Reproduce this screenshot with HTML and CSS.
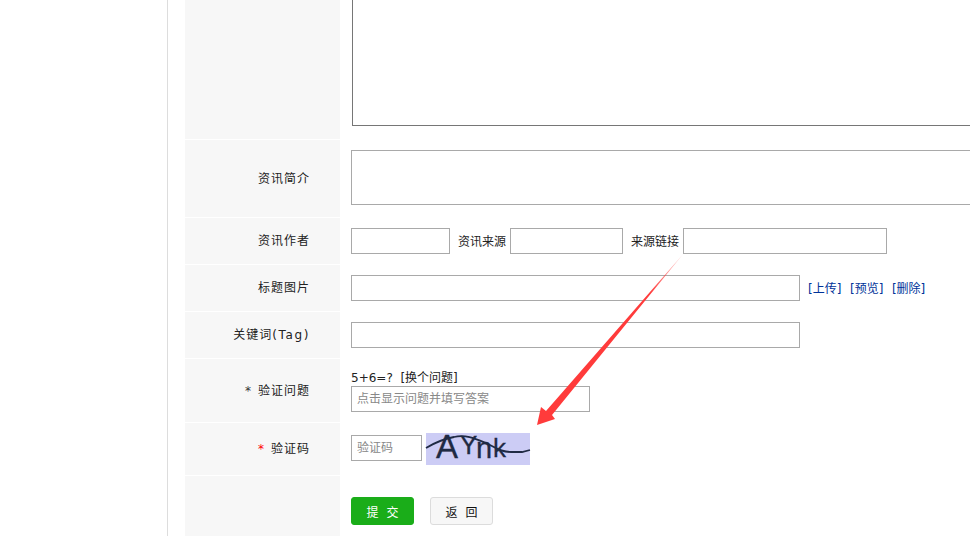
FILE: index.html
```html
<!DOCTYPE html>
<html lang="zh">
<head>
<meta charset="utf-8">
<title>资讯</title>
<link rel="stylesheet" href="styles.css">
</head>
<body>
<div class="page">
  <aside class="side"></aside>
  <form class="form">
    <div class="row r-body">
      <div class="label"></div>
      <div class="field"><div class="editor"></div></div>
    </div>
    <div class="row r-intro">
      <div class="label">资讯简介</div>
      <div class="field"><textarea class="intro"></textarea></div>
    </div>
    <div class="row r-std">
      <div class="label">资讯作者</div>
      <div class="field">
        <input class="in w-author">
        <span class="lab lab-a">资讯来源</span>
        <input class="in w-source">
        <span class="lab lab-b">来源链接</span>
        <input class="in w-link">
      </div>
    </div>
    <div class="row r-std">
      <div class="label">标题图片</div>
      <div class="field">
        <input class="in w-long">
        <span class="links"><a>[上传]</a><a>[预览]</a><a>[删除]</a></span>
      </div>
    </div>
    <div class="row r-std">
      <div class="label"><span>关键词<span class="latin">(Tag)</span></span></div>
      <div class="field"><input class="in w-long"></div>
    </div>
    <div class="row r-q">
      <div class="label"><span class="star-dark">*</span>验证问题</div>
      <div class="field col">
        <div class="q">5+6=?&nbsp;&nbsp;[换个问题]</div>
        <input class="in w-q" placeholder="点击显示问题并填写答案">
      </div>
    </div>
    <div class="row r-code">
      <div class="label"><span class="star-red">*</span>验证码</div>
      <div class="field code">
        <input class="in w-code" placeholder="验证码">
        <svg class="captcha" width="104" height="32" viewBox="0 0 104 32">
          <rect width="104" height="32" fill="#ccccf5"/>
          <g fill="#1f2a44" stroke="#1f2a44" stroke-width="0.3" font-family="'Liberation Sans', sans-serif">
            <text x="10" y="25" font-size="33">A</text>
            <text x="34" y="21" font-size="26">Y</text>
            <text x="50" y="25" font-size="29">n</text>
            <text x="67" y="24" font-size="26">k</text>
          </g>
          <path d="M0 15 C8 10 18 6 28 4 C40 1 50 6 62 11 C70 15 75 19 85 19 L96 19 L104 17" fill="none" stroke="#1f2a44" stroke-width="1.8"/>
        </svg>
      </div>
    </div>
    <div class="row r-btn">
      <div class="label"></div>
      <div class="field btns">
        <button type="button" class="btn ok">提 交</button>
        <button type="button" class="btn back">返 回</button>
      </div>
    </div>
  </form>
  <svg class="arrow" width="970" height="536" viewBox="0 0 970 536">
    <defs>
      <linearGradient id="fade" gradientUnits="userSpaceOnUse" x1="684" y1="253" x2="650" y2="293">
        <stop offset="0" stop-color="#ff3b3b" stop-opacity="0.15"/>
        <stop offset="1" stop-color="#ff3b3b"/>
      </linearGradient>
    </defs>
    <path d="M684 253 L552 415 L555 419 L537 425 L541 407 L546 411 Z" fill="url(#fade)"/>
  </svg>
</div>
</body>
</html>
```
FILE: styles.css
```css
html, body { margin: 0; padding: 0; background: #fff; }
.page {
  position: relative;
  display: flex;
  width: 970px;
  height: 536px;
  overflow: hidden;
  font: 12px/16px "DejaVu Sans", "Noto Sans CJK SC", sans-serif;
  color: #222;
}
.side { width: 167px; flex: none; border-right: 1px solid #ddd; margin-right: 17px; }
.form { flex: none; width: 785px; display: flex; flex-direction: column; gap: 1px; }
.row { display: flex; flex: none; }
.r-body { height: 139px; }
.r-intro { height: 77px; }
.r-std { height: 46px; }
.r-q { height: 63px; }
.r-code { height: 52px; }
.r-btn { height: 60px; }
.label {
  box-sizing: border-box;
  width: 155px;
  flex: none;
  padding: 0 30px 0 0;
  background: #f7f7f7;
  display: flex;
  align-items: center;
  justify-content: flex-end;
  letter-spacing: 1px;
}
.latin { letter-spacing: 1.6px; }
.field { flex: 1; display: flex; align-items: center; padding-left: 11px; min-width: 0; }
.col { flex-direction: column; align-items: flex-start; justify-content: flex-end; padding-bottom: 10px; }
.editor {
  box-sizing: border-box;
  width: 640px;
  height: 126px;
  margin: 0 0 13px 1px;
  border: 1px solid #767676;
  border-top: 0;
  background: #fff;
  flex: none;
}
.intro {
  box-sizing: border-box;
  display: block;
  width: 640px;
  height: 55px;
  border: 1px solid #a9a9a9;
  padding: 0;
  margin: 0 0 2px;
  resize: none;
  flex: none;
}
.in {
  box-sizing: border-box;
  height: 26px;
  border: 1px solid #a9a9a9;
  margin: 0;
  padding: 0 5px;
  background: #fff;
  flex: none;
  font: 12px "DejaVu Sans", "Noto Sans CJK SC", sans-serif;
  outline: none;
}
.in::placeholder { color: #888; opacity: 1; }
.w-author { width: 99px; }
.w-source { width: 113px; }
.w-link { width: 204px; }
.w-long { width: 449px; }
.w-q { width: 239px; }
.w-code { width: 71px; }
.lab { flex: none; padding-top: 2px; }
.lab-a { margin: 0 4px 0 8px; }
.lab-b { margin: 0 4px 0 8px; }
.links { margin-left: 8px; padding-top: 2px; display: flex; gap: 8.6px; color: #003399; }
.q { line-height: 16px; }
.star-dark { color: #333; margin-right: 6px; }
.star-red { color: #f00; margin-right: 6px; }
.code { align-items: flex-start; }
.code .in { margin-top: 12px; }
.captcha { margin: 10px 0 0 4px; flex: none; overflow: visible; }
.btns { gap: 16px; align-items: flex-start; padding-top: 21px; }
.btn {
  box-sizing: border-box;
  width: 63px;
  height: 28px;
  border-radius: 3px;
  padding: 0 0 0 2px;
  font: 12px "DejaVu Sans", "Noto Sans CJK SC", sans-serif;
  letter-spacing: 2px;
}
.ok { background: #1aad19; border: 1px solid #1aad19; color: #fff; }
.back { background: #f7f7f7; border: 1px solid #dcdcdc; color: #111; }
.arrow { position: absolute; left: 0; top: 0; pointer-events: none; }
```
